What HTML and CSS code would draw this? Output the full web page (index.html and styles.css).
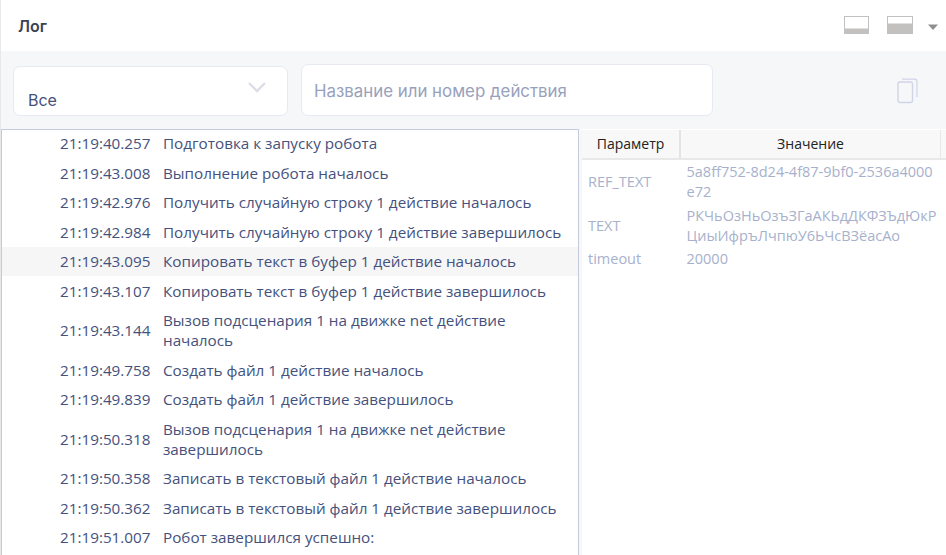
FILE: index.html
```html
<!DOCTYPE html>
<html lang="ru">
<head>
<meta charset="utf-8">
<title>Лог</title>
<link rel="stylesheet" href="styles.css">
</head>
<body>
<div class="app">
  <header class="topbar">
    <h1 class="title">Лог</h1>
    <div class="tools">
      <svg class="layout-icon" width="25" height="18" viewBox="0 0 25 18"><rect x="0" y="0" width="25" height="18" fill="#c2c1bf"/><rect x="1" y="1" width="23" height="11.5" fill="#fff"/></svg>
      <svg class="layout-icon second" width="26" height="18" viewBox="0 0 26 18"><rect x="0" y="0" width="26" height="18" fill="#c2c1bf"/><rect x="1" y="1" width="24" height="6.5" fill="#fff"/></svg>
      <svg class="caret" width="10" height="6" viewBox="0 0 10 6"><path d="M0 0.5H10L5 6Z" fill="#8f8f8f"/></svg>
    </div>
  </header>
  <section class="filters">
    <div class="select">
      <span class="select-value">Все</span>
      <svg class="chevron" width="20" height="12" viewBox="0 0 20 12"><path d="M2 2L10 10L18 2" fill="none" stroke="#dcdee6" stroke-width="2.4"/></svg>
    </div>
    <div class="search">Название или номер действия</div>
    <svg class="copy" width="22" height="26" viewBox="0 0 22 26"><rect x="1" y="4" width="14.5" height="20.5" rx="2" fill="none" stroke="#cfd5e6" stroke-width="1.4"/><path d="M5 1.2H18a2.2 2.2 0 0 1 2 2V19" fill="none" stroke="#cfd5e6" stroke-width="1.2"/></svg>
  </section>
  <main class="content">
    <div class="log">
      <div class="row"><span class="time">21:19:40.257</span><span class="msg">Подготовка к запуску робота</span></div>
      <div class="row"><span class="time">21:19:43.008</span><span class="msg">Выполнение робота началось</span></div>
      <div class="row"><span class="time">21:19:42.976</span><span class="msg">Получить случайную строку 1 действие началось</span></div>
      <div class="row"><span class="time">21:19:42.984</span><span class="msg">Получить случайную строку 1 действие завершилось</span></div>
      <div class="row active"><span class="time">21:19:43.095</span><span class="msg">Копировать текст в буфер 1 действие началось</span></div>
      <div class="row"><span class="time">21:19:43.107</span><span class="msg">Копировать текст в буфер 1 действие завершилось</span></div>
      <div class="row"><span class="time">21:19:43.144</span><span class="msg">Вызов подсценария 1 на движке net действие началось</span></div>
      <div class="row"><span class="time">21:19:49.758</span><span class="msg">Создать файл 1 действие началось</span></div>
      <div class="row"><span class="time">21:19:49.839</span><span class="msg">Создать файл 1 действие завершилось</span></div>
      <div class="row"><span class="time">21:19:50.318</span><span class="msg">Вызов подсценария 1 на движке net действие завершилось</span></div>
      <div class="row"><span class="time">21:19:50.358</span><span class="msg">Записать в текстовый файл 1 действие началось</span></div>
      <div class="row"><span class="time">21:19:50.362</span><span class="msg">Записать в текстовый файл 1 действие завершилось</span></div>
      <div class="row"><span class="time">21:19:51.007</span><span class="msg">Робот завершился успешно:</span></div>
    </div>
    <div class="params">
      <div class="params-head"><div class="th th-name">Параметр</div><div class="th th-value">Значение</div></div>
      <div class="param"><div class="p-name">REF_TEXT</div><div class="p-value">5a8ff752-8d24-4f87-9bf0-2536a4000<br>e72</div></div>
      <div class="param"><div class="p-name">TEXT</div><div class="p-value">РКЧьОзНьОзъЗГаАКЬдДКФЗЪдЮкР<br>ЦиыИфръЛчпюУ6ЬЧсВЗёасАо</div></div>
      <div class="param param-last"><div class="p-name">timeout</div><div class="p-value">20000</div></div>
    </div>
  </main>
</div>
</body>
</html>
```
FILE: styles.css
```css
* { box-sizing: border-box; }
html, body { margin: 0; height: 100%; overflow: hidden; background: #f6f7f9; }
body { font-family: "Open Sans", "Noto Sans", sans-serif; }
.app { width: 946px; height: 555px; display: flex; flex-direction: column; overflow: hidden; border-left: 1px solid #e8e8ea; }
.topbar { height: 51px; flex: none; background: #fff; display: flex; align-items: center; justify-content: space-between; padding: 0 8px 0 17px; }
.title { margin: 0; font: 600 16px Inter, sans-serif; color: #3b4256; }
.tools { display: flex; align-items: center; margin-top: -1px; }
.layout-icon { display: block; }
.layout-icon.second { margin-left: 18px; }
.caret { margin-left: 15px; margin-top: 3px; }
.filters { height: 78px; flex: none; display: flex; align-items: center; padding: 0 0 0 12px; }
.select { width: 275px; height: 50px; margin-top: 1px; background: #fff; border: 1px solid #e6e9f2; border-radius: 7px; position: relative; padding: 22px 14px 0; font: 400 16px/22px Inter, sans-serif; color: #45517d; }
.chevron { position: absolute; right: 20px; top: 14px; }
.search { width: 412px; height: 52px; margin-left: 13px; background: #fff; border: 1px solid #e6e9f2; border-radius: 7px; padding: 0 12px; font: 400 16.85px/52px Inter, sans-serif; color: #98a1bc; }
.copy { margin-left: 184px; margin-top: 1px; }
.content { flex: 1; min-height: 0; display: flex; align-items: stretch; }
.log { width: 578px; height: 440px; flex: none; background: #fff; border: 1px solid #c5cbdc; border-bottom: 0; }
.row { display: flex; align-items: center; padding: 4.75px 0; color: #45517d; font-size: 15.25px; line-height: 20px; }
.row:first-child { margin-top: -1.5px; }
.row.active { background: #f6f6f7; }
.time { width: 148.5px; flex: none; text-align: right; }
.msg { margin-left: 12.5px; width: 405px; }
.params { width: 364px; margin-left: 3px; background: #fff; }
.params-head { display: flex; height: 29.5px; margin-top: 1px; background: #f8f8f8; border-bottom: 2px solid #e8e8e8; }
.th { font-size: 14px; line-height: 28px; color: #222; text-align: center; }
.th-name { width: 99px; border-right: 2px solid #e4e4e4; }
.th-value { width: 260px; border-right: 1px solid #e8e8e8; }
.param { display: flex; align-items: center; color: #a7b1cc; font-size: 14.5px; line-height: 20px; padding: 2px 0; }
.param-last { padding-top: 1px; }
.p-name { width: 104.5px; flex: none; padding-left: 6px; }
.p-value { flex: 1; white-space: nowrap; }
```
